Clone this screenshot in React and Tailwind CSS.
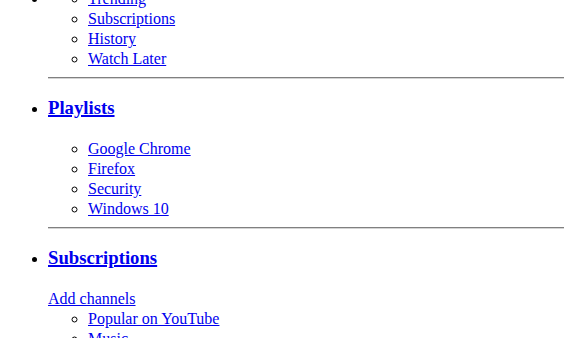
export default function App() {
  const sections = [
    { items: ["Trending", "Subscriptions", "History", "Watch Later"] },
    { title: "Playlists", items: ["Google Chrome", "Firefox", "Security", "Windows 10"] },
    { title: "Subscriptions", lead: "Add channels", items: ["Popular on YouTube", "Music", "Sports", "Gaming"] },
  ];

  return (
    <div className="h-[338px] overflow-hidden bg-white pl-2 font-['Liberation_Serif',serif] text-[16px] leading-[20px] text-black">
      <ul className="-mt-[10.6px] list-disc pl-10">
        {sections.map((s, i) => (
          <li key={i}>
            {s.title && (
              <h3 className="mt-[18px] mb-[20px] text-[18.72px] font-bold leading-[22px]">
                <a href="#" className="text-[#0000ee] underline decoration-2">{s.title}</a>
              </h3>
            )}
            {s.lead && (
              <a href="#" className="text-[#0000ee] underline">{s.lead}</a>
            )}
            <ul className="list-[circle] pl-10">
              {s.items.map((it) => (
                <li key={it}>
                  <a href="#" className="text-[#0000ee] underline">{it}</a>
                </li>
              ))}
            </ul>
            {i < 2 && (
              <hr className="mt-2 mb-[18px] h-0 border-t border-b border-t-[#808080] border-b-[#d4d4d4]" />
            )}
          </li>
        ))}
      </ul>
    </div>
  );
}
